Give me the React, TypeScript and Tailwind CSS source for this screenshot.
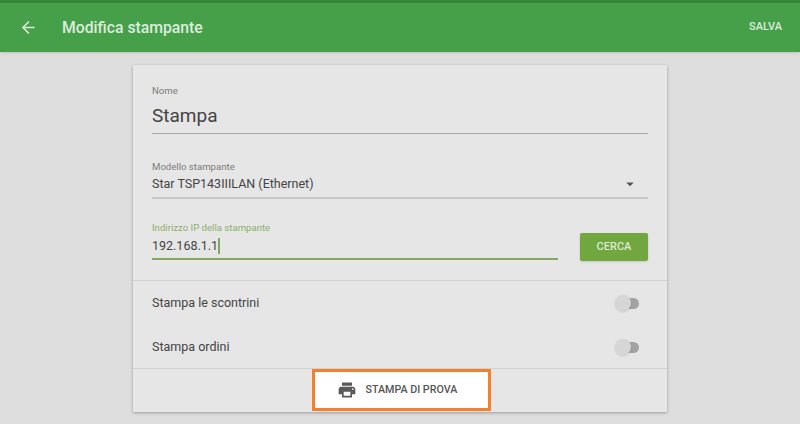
import React from 'react';
import { ArrowLeft } from 'lucide-react';
import { MdPrint, MdArrowDropDown } from 'react-icons/md';

const Toggle = () => (
  <div className="relative w-[24px] h-[20px] flex items-center justify-end">
    <div className="w-[20px] h-[11px] rounded-full bg-[#a3a3a3]" />
    <div className="absolute left-0 top-[2px] w-[16px] h-[16px] rounded-full bg-[#d6d6d6] shadow-sm" />
  </div>
);

const ToggleRow = ({ label }: { label: string }) => (
  <div className="flex items-center justify-between h-[44px] pl-[19px] pr-[28px]">
    <span className="text-[12.5px] text-[#444444]">{label}</span>
    <Toggle />
  </div>
);

export default function App() {
  return (
    <div className="w-[800px] h-[424px] overflow-hidden bg-[#dedede] font-['Roboto',sans-serif]">
      <div className="h-[3px] bg-[#37863b]" />
      <header className="flex items-center h-[49px] bg-[#46a04a] text-[#dcebdc] shadow-sm">
        <ArrowLeft size={19} strokeWidth={2} className="ml-[19px]" />
        <h1 className="ml-[24px] text-[15.75px] font-medium">Modifica stampante</h1>
        <button className="ml-auto mr-[18px] text-[11px] font-medium">SALVA</button>
      </header>

      <main className="w-[534px] h-[347px] mx-auto mt-[13px] bg-[#e6e6e6] shadow-[0_1px_3px_rgba(0,0,0,0.3)] flex flex-col">
        <section className="h-[216px] border-b border-[#d2d2d2] px-[19px] pt-[20px]">
          <div className="text-[9.6px] leading-[11px] text-[#7b7b7b]">Nome</div>
          <div className="mt-[7px] h-[31px] border-b border-[#a8a8a8] text-[19px] leading-[26px] text-[#444444]">
            Stampa
          </div>

          <div className="mt-[27px] text-[9.6px] leading-[11px] text-[#7b7b7b]">Modello stampante</div>
          <div className="flex items-center justify-between h-[27px] pb-[1px] border-b-2 border-[#c8c8c8] text-[12.5px] text-[#444444]">
            <span>Star TSP143IIILAN (Ethernet)</span>
            <MdArrowDropDown size={18} className="mr-[9px] text-[#555555]" />
          </div>

          <div className="flex items-start mt-[23px]">
            <div className="flex-1">
              <div className="text-[9.6px] leading-[11px] text-[#8cae6a]">Indirizzo IP della stampante</div>
              <div className="flex items-center h-[27px] pt-[1px] border-b-2 border-[#82a862] text-[12.5px] text-[#444444]">
                <span>192.168.1.1</span>
                <span className="w-[2px] h-[16px] bg-[#7ea85a]" />
              </div>
            </div>
            <button className="ml-[22px] mt-[11px] w-[68px] h-[28px] rounded-[2px] bg-[#72a63e] text-[#dcebcf] text-[11px] font-medium shadow-sm">
              CERCA
            </button>
          </div>
        </section>

        <section className="h-[88px] border-b border-[#d2d2d2]">
          <ToggleRow label="Stampa le scontrini" />
          <ToggleRow label="Stampa ordini" />
        </section>

        <footer className="flex-1 flex justify-center pl-[2px]">
          <button className="flex items-center justify-start pl-[22px] w-[179px] h-[42px] bg-white border-[3px] border-[#f47f2c] text-[10.7px] font-medium text-[#555555]">
            <MdPrint size={20} className="mr-[9px] text-[#5a5a5a]" />
            STAMPA DI PROVA
          </button>
        </footer>
      </main>
    </div>
  );
}
